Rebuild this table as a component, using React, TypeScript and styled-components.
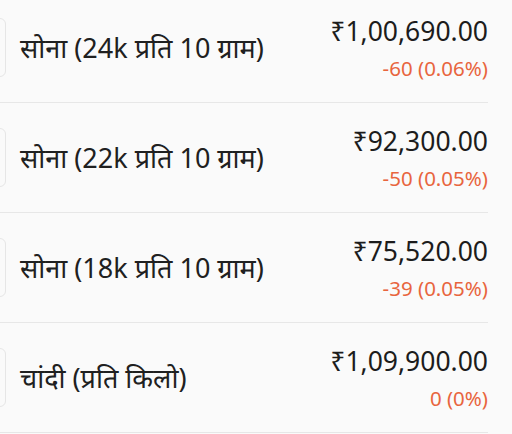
import React from 'react';
import styled, { createGlobalStyle } from 'styled-components';

const GlobalStyle = createGlobalStyle`
  html, body {
    margin: 0;
    padding: 0;
    background: #fafafa;
    overflow: hidden;
  }
  body {
    font-family: "Noto Sans", "Noto Sans Devanagari", "Open Sans", sans-serif;
    color: #1c1c1c;
  }
`;

const RateList = styled.div`
  width: 538px;
  margin-left: -50px;
  margin-top: -7px;
`;

const RateRow = styled.div`
  height: 109px;
  display: flex;
  align-items: center;
  border-bottom: 1px solid #e7e7e7;
`;

const Thumb = styled.div`
  width: 56px;
  height: 59px;
  flex: none;
  box-sizing: border-box;
  border: 1px solid #e6e6e6;
  border-radius: 6px;
  background: #fafafa;
`;

const Label = styled.div`
  flex: 1;
  margin-left: 14px;
  font-size: 27px;
  line-height: 34px;
  color: #202020;
`;

const Prices = styled.div`
  display: flex;
  flex-direction: column;
  align-items: flex-end;
`;

const Price = styled.div`
  font-size: 26.5px;
  line-height: 34px;
`;

const Change = styled.div`
  margin-top: 6px;
  font-size: 20.5px;
  line-height: 28px;
  color: #e8653e;
`;

const rates = [
  { label: 'सोना (24k प्रति 10 ग्राम)', price: '₹1,00,690.00', change: '-60 (0.06%)' },
  { label: 'सोना (22k प्रति 10 ग्राम)', price: '₹92,300.00', change: '-50 (0.05%)' },
  { label: 'सोना (18k प्रति 10 ग्राम)', price: '₹75,520.00', change: '-39 (0.05%)' },
  { label: 'चांदी (प्रति किलो)', price: '₹1,09,900.00', change: '0 (0%)' },
];

const App = () => {
  return (
    <>
      <GlobalStyle />
      <RateList>
        {rates.map(r => (
          <RateRow key={r.label}>
            <Thumb />
            <Label>{r.label}</Label>
            <Prices>
              <Price>{r.price}</Price>
              <Change>{r.change}</Change>
            </Prices>
          </RateRow>
        ))}
      </RateList>
    </>
  );
};

export default App;
